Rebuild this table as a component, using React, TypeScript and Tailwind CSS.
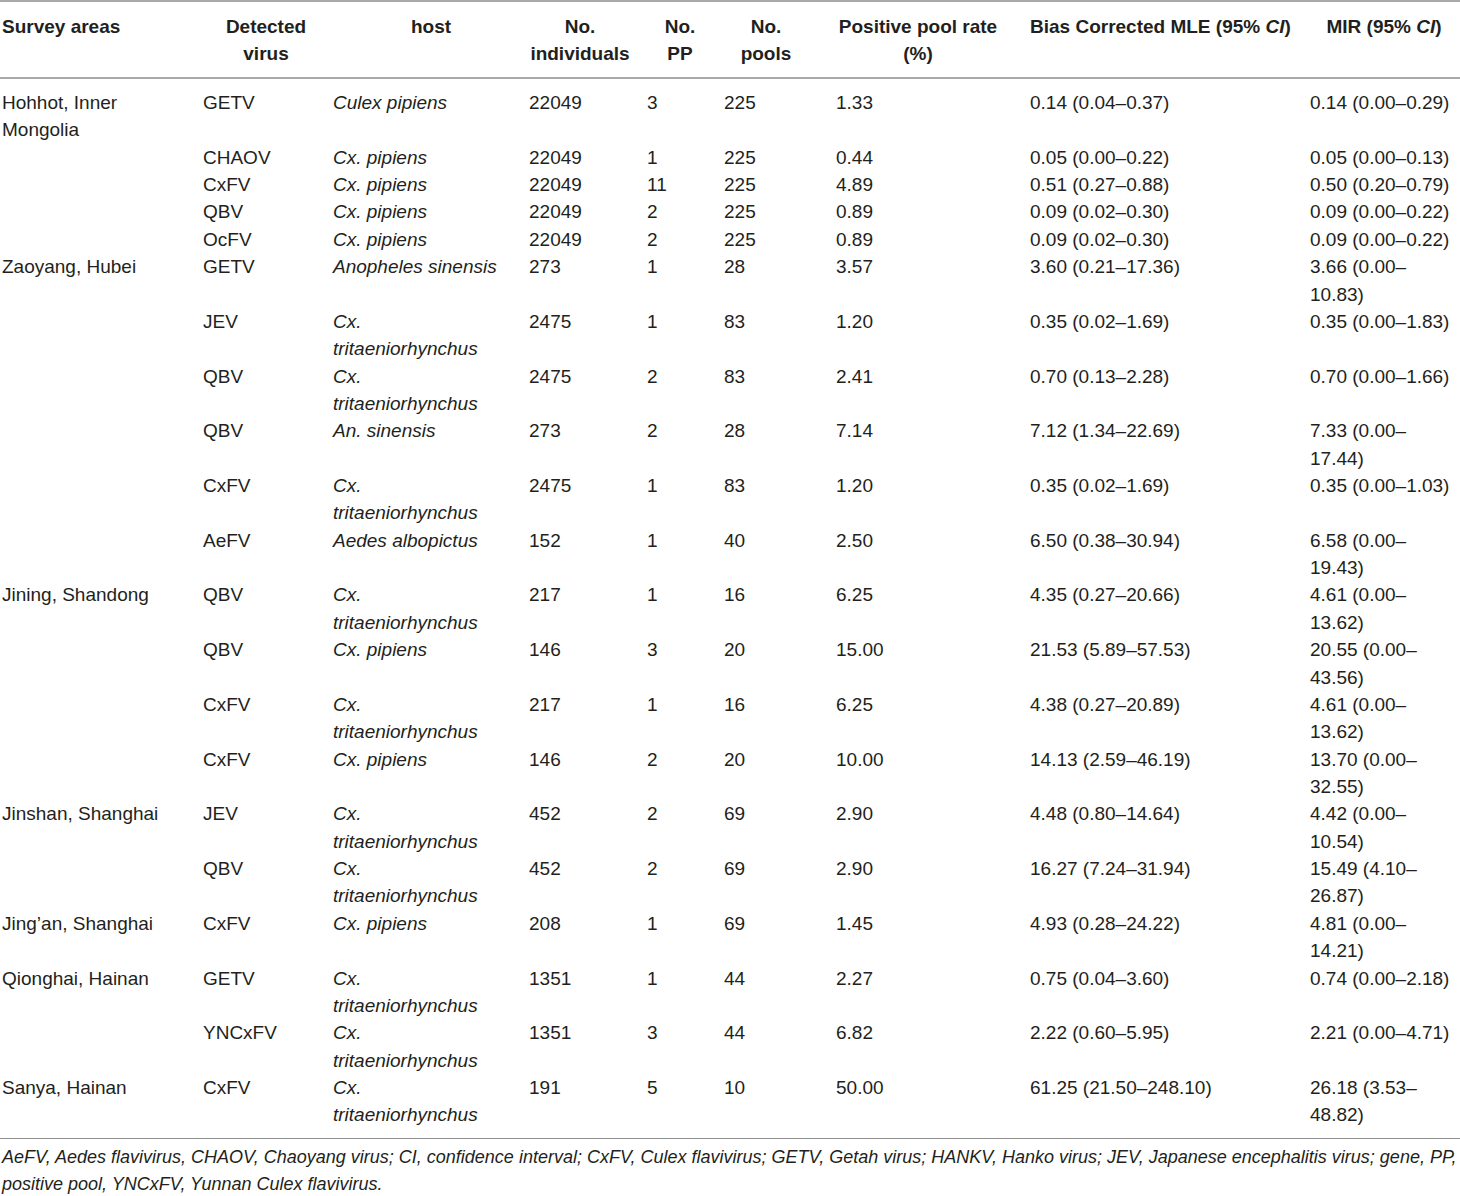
const rows: string[][] = [
  ["Hohhot, Inner Mongolia", "GETV", "Culex pipiens", "22049", "3", "225", "1.33", "0.14 (0.04–0.37)", "0.14 (0.00–0.29)"],
  ["", "CHAOV", "Cx. pipiens", "22049", "1", "225", "0.44", "0.05 (0.00–0.22)", "0.05 (0.00–0.13)"],
  ["", "CxFV", "Cx. pipiens", "22049", "11", "225", "4.89", "0.51 (0.27–0.88)", "0.50 (0.20–0.79)"],
  ["", "QBV", "Cx. pipiens", "22049", "2", "225", "0.89", "0.09 (0.02–0.30)", "0.09 (0.00–0.22)"],
  ["", "OcFV", "Cx. pipiens", "22049", "2", "225", "0.89", "0.09 (0.02–0.30)", "0.09 (0.00–0.22)"],
  ["Zaoyang, Hubei", "GETV", "Anopheles sinensis", "273", "1", "28", "3.57", "3.60 (0.21–17.36)", "3.66 (0.00–10.83)"],
  ["", "JEV", "Cx. tritaeniorhynchus", "2475", "1", "83", "1.20", "0.35 (0.02–1.69)", "0.35 (0.00–1.83)"],
  ["", "QBV", "Cx. tritaeniorhynchus", "2475", "2", "83", "2.41", "0.70 (0.13–2.28)", "0.70 (0.00–1.66)"],
  ["", "QBV", "An. sinensis", "273", "2", "28", "7.14", "7.12 (1.34–22.69)", "7.33 (0.00–17.44)"],
  ["", "CxFV", "Cx. tritaeniorhynchus", "2475", "1", "83", "1.20", "0.35 (0.02–1.69)", "0.35 (0.00–1.03)"],
  ["", "AeFV", "Aedes albopictus", "152", "1", "40", "2.50", "6.50 (0.38–30.94)", "6.58 (0.00–19.43)"],
  ["Jining, Shandong", "QBV", "Cx. tritaeniorhynchus", "217", "1", "16", "6.25", "4.35 (0.27–20.66)", "4.61 (0.00–13.62)"],
  ["", "QBV", "Cx. pipiens", "146", "3", "20", "15.00", "21.53 (5.89–57.53)", "20.55 (0.00–43.56)"],
  ["", "CxFV", "Cx. tritaeniorhynchus", "217", "1", "16", "6.25", "4.38 (0.27–20.89)", "4.61 (0.00–13.62)"],
  ["", "CxFV", "Cx. pipiens", "146", "2", "20", "10.00", "14.13 (2.59–46.19)", "13.70 (0.00–32.55)"],
  ["Jinshan, Shanghai", "JEV", "Cx. tritaeniorhynchus", "452", "2", "69", "2.90", "4.48 (0.80–14.64)", "4.42 (0.00–10.54)"],
  ["", "QBV", "Cx. tritaeniorhynchus", "452", "2", "69", "2.90", "16.27 (7.24–31.94)", "15.49 (4.10–26.87)"],
  ["Jing’an, Shanghai", "CxFV", "Cx. pipiens", "208", "1", "69", "1.45", "4.93 (0.28–24.22)", "4.81 (0.00–14.21)"],
  ["Qionghai, Hainan", "GETV", "Cx. tritaeniorhynchus", "1351", "1", "44", "2.27", "0.75 (0.04–3.60)", "0.74 (0.00–2.18)"],
  ["", "YNCxFV", "Cx. tritaeniorhynchus", "1351", "3", "44", "6.82", "2.22 (0.60–5.95)", "2.21 (0.00–4.71)"],
  ["Sanya, Hainan", "CxFV", "Cx. tritaeniorhynchus", "191", "5", "10", "50.00", "61.25 (21.50–248.10)", "26.18 (3.53–48.82)"],
];

// right padding per data column, so the wraps fall where the original's do
const cellPad = [
  "pl-[2px] pr-[16px]",
  "pl-[3px] pr-[4px]",
  "pl-[3px] pr-[25px]",
  "pl-[2px] pr-[4px]",
  "pl-[2px] pr-[4px]",
  "pl-[2px] pr-[4px]",
  "pl-[2px] pr-[4px]",
  "pl-[2px] pr-[4px]",
  "pl-[2px] pr-[4px]",
];

export default function App() {
  return (
    <div className="w-[1460px] h-[1196px] bg-white text-[#231f20] font-['Liberation_Sans',Arial,sans-serif] overflow-hidden">
      <table className="w-[1460px] table-fixed border-collapse text-[19px] leading-[27.36px]">
        <colgroup>
          <col className="w-[200px]" />
          <col className="w-[130px]" />
          <col className="w-[197px]" />
          <col className="w-[118px]" />
          <col className="w-[77px]" />
          <col className="w-[112px]" />
          <col className="w-[194px]" />
          <col className="w-[280px]" />
          <col className="w-[152px]" />
        </colgroup>
        <thead>
          <tr className="border-t-2 border-b-2 border-[#a9a9a9] font-bold align-top leading-[27px] whitespace-nowrap">
            <th className="text-left pl-[2px] pt-[11px] pb-[10px]">Survey areas</th>
            <th className="text-center pl-[2px] pr-0 pt-[11px] pb-[10px]">
              Detected
              <br />
              virus
            </th>
            <th className="text-center pl-[5px] pr-0 pt-[11px] pb-[10px]">host</th>
            <th className="text-center pl-[2px] pr-[14px] pt-[11px] pb-[10px]">
              No.
              <br />
              individuals
            </th>
            <th className="text-center pl-[2px] pr-[9px] pt-[11px] pb-[10px]">
              No.
              <br />
              PP
            </th>
            <th className="text-center pl-[2px] pr-[26px] pt-[11px] pb-[10px]">
              No.
              <br />
              pools
            </th>
            <th className="text-center pl-0 pr-[26px] pt-[11px] pb-[10px]">
              Positive pool rate
              <br />
              (%)
            </th>
            <th className="text-left pl-[2px] pt-[11px] pb-[10px]">
              Bias Corrected MLE (95% <i>CI</i>)
            </th>
            <th className="text-center pt-[11px] pb-[10px]">
              MIR (95% <i>CI</i>)
            </th>
          </tr>
        </thead>
        <tbody>
          {rows.map((row, i) => (
            <tr
              key={i}
              className={
                i === rows.length - 1 ? "align-top border-b border-[#8f8f8f]" : "align-top"
              }
            >
              {row.map((cell, j) => (
                <td
                  key={j}
                  className={`${cellPad[j]} ${j === 2 ? "italic" : ""} ${
                    i === 0 ? "pt-[10px]" : ""
                  } ${i === rows.length - 1 ? "pb-[9px]" : ""}`}
                >
                  {cell}
                </td>
              ))}
            </tr>
          ))}
        </tbody>
      </table>

      <p className="pl-[2px] pt-[5px] text-[18px] leading-[27px] italic whitespace-nowrap">
        AeFV, Aedes flavivirus, CHAOV, Chaoyang virus; CI, confidence interval; CxFV, Culex flavivirus; GETV,
        Getah virus; HANKV, Hanko virus; JEV, Japanese encephalitis virus; gene, PP,
        <br />
        positive pool, YNCxFV, Yunnan Culex flavivirus.
      </p>
    </div>
  );
}
